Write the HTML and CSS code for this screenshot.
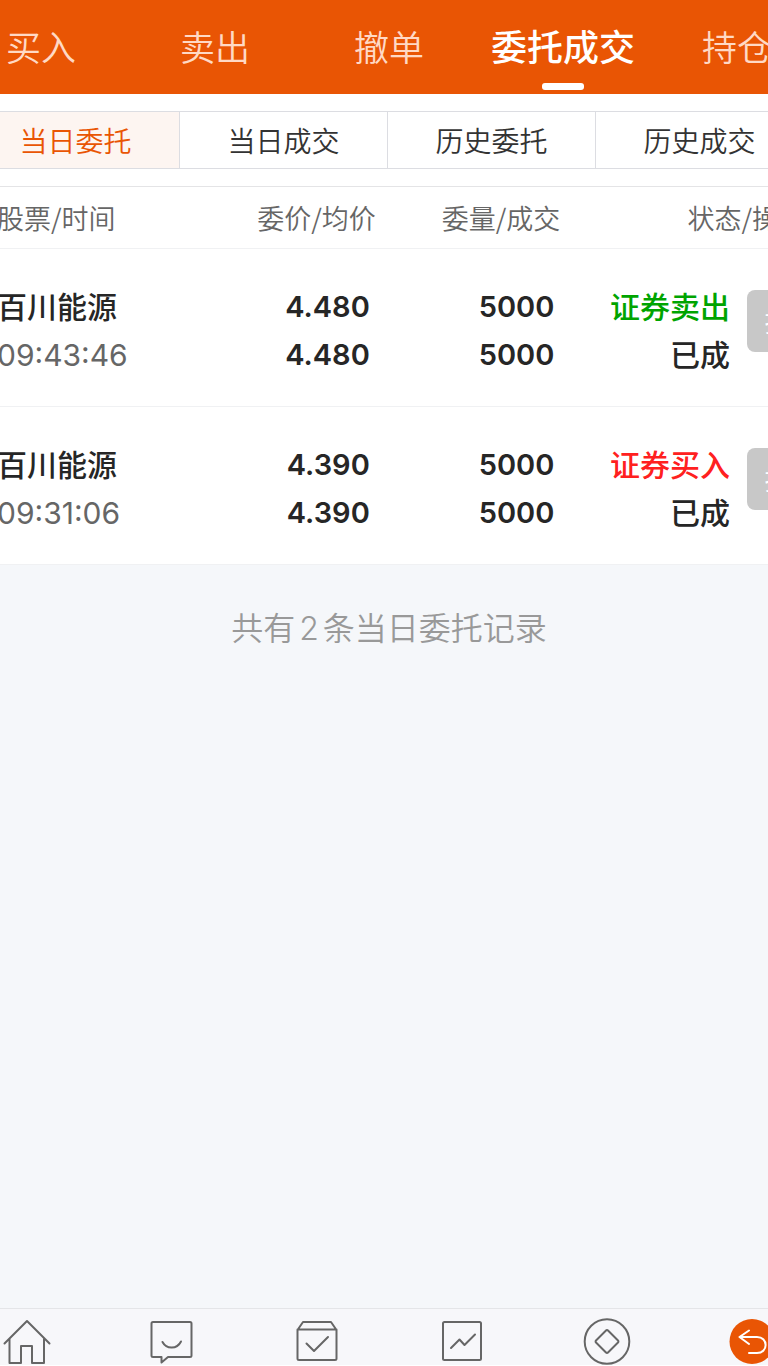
FILE: index.html
```html
<!DOCTYPE html>
<html lang="zh-CN">
<head>
<meta charset="utf-8">
<meta name="viewport" content="width=device-width, initial-scale=1">
<title>委托成交</title>
<link rel="stylesheet" href="styles.css">
</head>
<body>
<div class="app">
  <nav class="tabs">
    <button class="tab" type="button">买入</button>
    <button class="tab" type="button">卖出</button>
    <button class="tab" type="button">撤单</button>
    <button class="tab tab-active" type="button">委托成交</button>
    <button class="tab" type="button">持仓</button>
  </nav>
  <main class="content">
    <div class="filters">
      <button class="filter filter-active" type="button">当日委托</button>
      <button class="filter" type="button">当日成交</button>
      <button class="filter" type="button">历史委托</button>
      <button class="filter" type="button">历史成交</button>
    </div>
    <table class="orders">
      <colgroup>
        <col class="col-stock"><col class="col-num"><col class="col-num"><col class="col-status"><col class="col-action">
      </colgroup>
      <thead>
        <tr>
          <th class="stock">股票/时间</th>
          <th>委价/均价</th>
          <th>委量/成交</th>
          <th class="state" colspan="2">状态/操作</th>
        </tr>
      </thead>
      <tbody>
        <tr>
          <td class="stock">百川能源<br><span class="time">09:43:46</span></td>
          <td class="num">4.480<br>4.480</td>
          <td class="num">5000<br>5000</td>
          <td><span class="sell">证券卖出</span><br>已成</td>
          <td class="action"><button class="cancel" type="button">撤</button></td>
        </tr>
        <tr>
          <td class="stock">百川能源<br><span class="time">09:31:06</span></td>
          <td class="num">4.390<br>4.390</td>
          <td class="num">5000<br>5000</td>
          <td><span class="buy">证券买入</span><br>已成</td>
          <td class="action"><button class="cancel" type="button">撤</button></td>
        </tr>
      </tbody>
    </table>
    <p class="summary">共有<span class="count">2</span>条当日委托记录</p>
  </main>
  <nav class="toolbar">
    <button class="tool" type="button" aria-label="首页">
      <svg class="icon" viewBox="0 0 48 48"><path d="M1.500 25.500 24 3l22.500 22.500M6.500 21v24H18V28h11v17h12V21"/></svg>
    </button>
    <button class="tool" type="button" aria-label="消息">
      <svg class="icon" viewBox="0 0 48 48"><path d="M5 4h37a1.500 1.500 0 0 1 1.500 1.500V37.500A1.500 1.500 0 0 1 42 39H20l-6.500 5.500V39H5a1.500 1.500 0 0 1-1.500-1.500V5.500A1.500 1.500 0 0 1 5 4zM14.500 24c4 7.500 14.500 7.500 18.500-.5"/></svg>
    </button>
    <button class="tool" type="button" aria-label="交易">
      <svg class="icon" viewBox="0 0 48 48"><path d="M4.500 12 10 4h28l5.500 8v28.500A1.500 1.500 0 0 1 42 42H6a1.500 1.500 0 0 1-1.500-1.500zM4.500 11.500h39M13.500 25.500 21 33l14-14"/></svg>
    </button>
    <button class="tool" type="button" aria-label="行情">
      <svg class="icon" viewBox="0 0 48 48"><rect x="5" y="4" width="38" height="38" rx="1.500"/><path d="m13 30 8.500-8.500 5 5.500L37 16.500"/></svg>
    </button>
    <button class="tool" type="button" aria-label="理财">
      <svg class="icon" viewBox="0 0 48 48"><circle cx="24" cy="23.500" r="22.300"/><path d="M23 12.500a1.400 1.400 0 0 1 2 0L35 22.500a1.400 1.400 0 0 1 0 2L25 34.500a1.400 1.400 0 0 1-2 0L13 24.500a1.400 1.400 0 0 1 0-2z"/></svg>
    </button>
    <button class="tool" type="button" aria-label="返回">
      <svg class="icon icon-back" viewBox="0 0 48 48"><circle cx="24" cy="23.500" r="22.500"/><path d="M21 12.500 11.500 19l9.500 7M12 19h17c11.500 0 11.500 16 0 16h-8"/></svg>
    </button>
  </nav>
</div>
</body>
</html>
```
FILE: styles.css
```css
* {
  box-sizing: border-box;
}

body {
  margin: 0;
  padding-bottom: 1px;
  overflow: hidden;
  background: #fff;
  color: #262626;
  font-family: Inter, "Noto Sans CJK SC", sans-serif;
}

button {
  margin: 0;
  padding: 0;
  border: 0;
  background: none;
  color: inherit;
  font: inherit;
  white-space: nowrap;
}

/* The content runs past both edges of the window. */
.app {
  display: flex;
  flex-direction: column;
  min-height: calc(100vh - 1px);
  margin: 0 -56px 0 -46px;
  background: #f5f7fa;
}

.tabs {
  display: flex;
  height: 94px;
  background: #e95504;
}

.tab {
  position: relative;
  flex: 1;
  padding-bottom: 4px;
  color: #ffd9c5;
  font-size: 35px;
  font-weight: 350;
}

.tab-active {
  color: #fff;
  font-size: 36px;
  font-weight: 500;
}

.tab-active::after {
  content: "";
  position: absolute;
  bottom: 4px;
  left: 50%;
  width: 42px;
  height: 7px;
  margin-left: -21px;
  border-radius: 3px;
  background: #fff;
}

.content {
  flex: 1;
}

.filters {
  display: flex;
  padding: 17px 21px 17px 17px;
  background: #fff;
}

.filter {
  flex: 1;
  height: 58px;
  border: 1px solid #dcdde2;
  border-right: 0;
  color: #333;
  font-size: 28px;
  font-weight: 350;
}

.filter-active {
  background: #fdf5f1;
  color: #e95504;
}

.orders {
  width: 100%;
  border-collapse: separate;
  border-spacing: 0;
  border-top: 1px solid #e4e4e6;
  background: #fff;
  table-layout: fixed;
}

.col-stock {
  width: 27%;
}

.col-num {
  width: 21%;
}

.col-status {
  width: 20%;
}

.col-action {
  width: 10%;
}

th,
td {
  border-bottom: 1px solid #f0f1f3;
  text-align: right;
  white-space: nowrap;
}

th {
  height: 62px;
  padding: 0;
  color: #666;
  font-family: "Noto Sans CJK SC", sans-serif;
  font-size: 27px;
  font-weight: 350;
}

td {
  padding: 34px 6px 27px 0;
  font-size: 30px;
  font-weight: 500;
  line-height: 48px;
  vertical-align: top;
}

.num {
  font-size: 29px;
  font-weight: 600;
}

.stock {
  padding-left: 43px;
  text-align: left;
}

.state {
  padding-right: 18px;
}

.time {
  color: #666;
  font-weight: 400;
}

.sell {
  color: #00a400;
}

.buy {
  color: #ff2020;
}

.action {
  padding: 41px 0 0 11px;
  text-align: left;
}

.cancel {
  display: block;
  width: 62px;
  height: 62px;
  padding-top: 4px;
  border-radius: 8px;
  background: #c8c8c8;
  color: #fff;
  font-size: 27px;
  font-weight: 400;
}

.summary {
  margin: 40px 0 0;
  color: #999;
  font-size: 32px;
  font-weight: 350;
  line-height: 48px;
  text-align: center;
}

.count {
  margin: 0 4px;
}

.toolbar {
  display: flex;
  height: 57px;
  border-top: 1px solid #e4e5e8;
  background: #f7f7fa;
}

.tool {
  display: flex;
  flex: 1;
  align-items: center;
  justify-content: center;
}

.icon {
  width: 48px;
  height: 48px;
  margin-top: 10px;
  overflow: visible;
  fill: none;
  stroke: #666;
  stroke-width: 2;
  stroke-linecap: round;
  stroke-linejoin: round;
}

.icon-back circle {
  fill: #e95504;
  stroke: none;
}

.icon-back path {
  stroke: #fff;
}
```
